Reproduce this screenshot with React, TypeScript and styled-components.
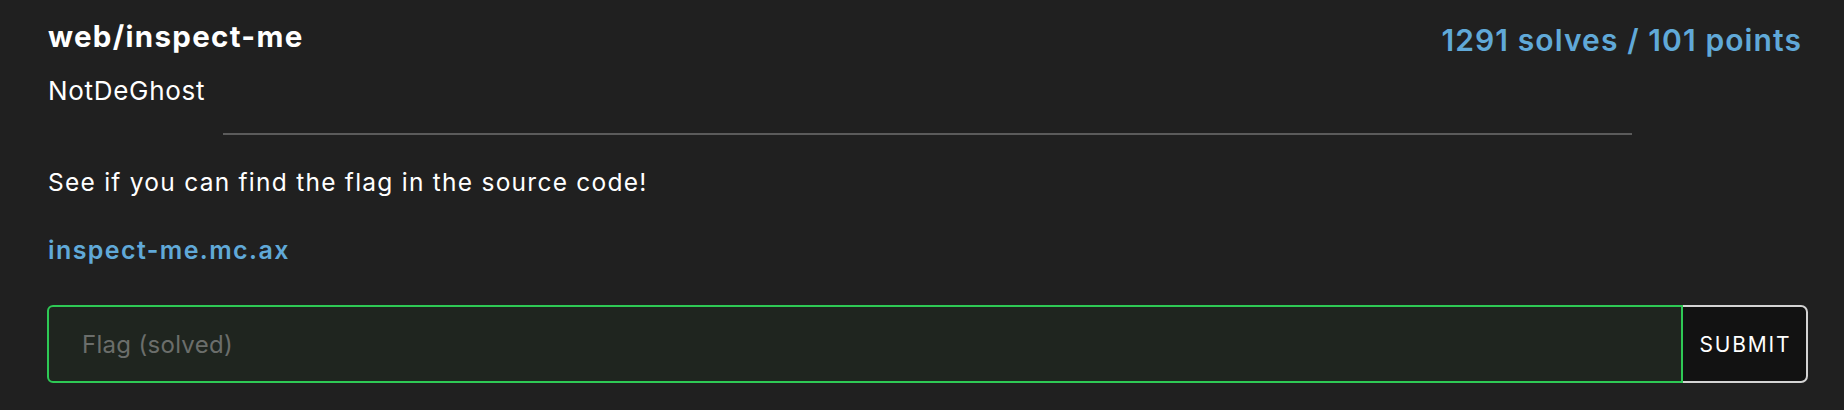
import React from "react";
import styled, { createGlobalStyle } from "styled-components";

const Global = createGlobalStyle`
  html, body { margin: 0; padding: 0; background: #202020; }
  body { font-family: Inter, "Noto Sans", sans-serif; color: #ffffff; }
  * { box-sizing: border-box; }
`;

const Card = styled.div`
  width: 1844px;
  height: 410px;
  background: #202020;
  padding: 18px 36px 0 47px;
`;

const Header = styled.div`
  display: flex;
  justify-content: space-between;
  align-items: flex-start;
`;

const TitleBlock = styled.div`
  display: flex;
  flex-direction: column;
  padding-left: 1px;
`;

const Title = styled.div`
  font-size: 29.5px;
  font-weight: 700;
  letter-spacing: 1.3px;
  line-height: normal;
`;

const Author = styled.div`
  font-size: 26px;
  font-weight: 400;
  letter-spacing: 0.7px;
  margin-top: 21px;
  line-height: normal;
`;

const Stats = styled.div`
  font-size: 30px;
  font-weight: 600;
  letter-spacing: 1.1px;
  color: #60a9d8;
  margin-top: 4px;
  margin-right: 6px;
`;

const Divider = styled.hr`
  width: 80%;
  margin: 27px auto 0;
  border: none;
  border-top: 2px solid #5b5b5b;
  height: 0;
`;

const Description = styled.p`
  font-size: 24.5px;
  letter-spacing: 1.25px;
  margin: 32px 0 0 1px;
  line-height: normal;
`;

const Link = styled.a`
  display: block;
  font-size: 25px;
  font-weight: 600;
  letter-spacing: 1.4px;
  color: #60a9d8;
  text-decoration: none;
  margin: 38px 0 0 1px;
`;

const Form = styled.form`
  display: flex;
  margin-top: 40px;
  height: 78px;
`;

const FlagInput = styled.input`
  flex: 1;
  height: 100%;
  background: #1f251f;
  border: 2px solid #2ec955;
  border-radius: 6px 0 0 6px;
  padding: 0 0 0 33px;
  font-family: Inter, "Noto Sans", sans-serif;
  font-size: 24px;
  color: #ffffff;
  outline: none;
  &::placeholder { color: #6b6e6b; letter-spacing: 0.3px; }
`;

const SubmitButton = styled.button`
  width: 125px;
  height: 100%;
  background: #121212;
  border: 2px solid #d4d4d4;
  border-left: none;
  border-radius: 0 7px 7px 0;
  color: #ffffff;
  font-family: Inter, "Noto Sans", sans-serif;
  font-size: 21px;
  letter-spacing: 1.8px;
  padding: 0 0 0 2px;
`;

export default function App() {
  return (
    <>
      <Global />
      <Card>
        <Header>
          <TitleBlock>
            <Title>web/inspect-me</Title>
            <Author>NotDeGhost</Author>
          </TitleBlock>
          <Stats>1291 solves / 101 points</Stats>
        </Header>
        <Divider />
        <Description>See if you can find the flag in the source code!</Description>
        <Link href="#">inspect-me.mc.ax</Link>
        <Form onSubmit={(e) => e.preventDefault()}>
          <FlagInput placeholder="Flag (solved)" />
          <SubmitButton type="button">SUBMIT</SubmitButton>
        </Form>
      </Card>
    </>
  );
}
